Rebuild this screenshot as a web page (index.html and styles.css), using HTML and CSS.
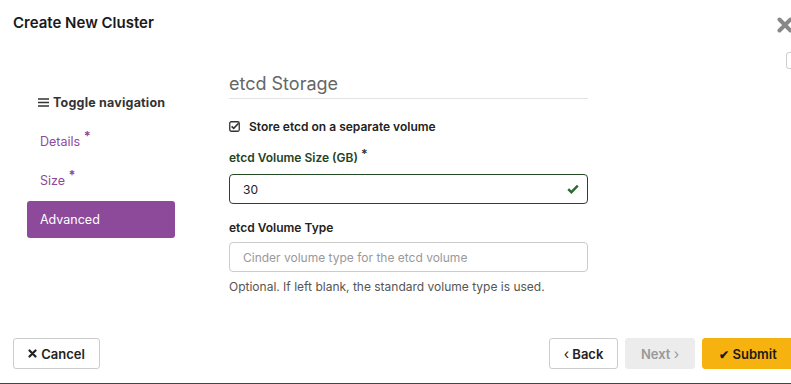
FILE: index.html
```html
<!DOCTYPE html>
<html>
  <head>
    <meta charset="utf-8">
    <title>Create New Cluster</title>
    <link rel="stylesheet" href="styles.css">
  </head>
  <body>
    <div class="modal">
      <div class="modal-header">
        <h4 class="modal-title">Create New Cluster</h4>
        <svg class="close" width="16" height="16" viewBox="0 0 16 16">
          <path d="M2.5 2.5 L13.5 13.5 M13.5 2.5 L2.5 13.5" stroke="#888" stroke-width="4" stroke-linecap="round"/>
        </svg>
        <span class="help-box"></span>
      </div>

      <div class="modal-body">
        <div class="wizard-nav">
          <div class="toggle">
            <svg width="11" height="9" viewBox="0 0 11 9">
              <path d="M0 1 H11 M0 4.5 H11 M0 8 H11" stroke="#333" stroke-width="1.6"/>
            </svg>
            Toggle navigation
          </div>
          <a class="step">Details <span class="req">*</span></a>
          <a class="step">Size <span class="req">*</span></a>
          <a class="step active">Advanced</a>
        </div>

        <div class="wizard-content">
          <h3 class="section-title">etcd Storage</h3>

          <div class="check-row">
            <span class="check-icon">
              <svg width="11" height="11" viewBox="0 0 11 11">
                <rect x="0.75" y="0.75" width="9.5" height="9.5" rx="1.5" fill="none" stroke="#333" stroke-width="1.3"/>
                <path d="M2.6 5.4 L4.7 7.4 L9.6 2.2" fill="none" stroke="#333" stroke-width="1.6"/>
              </svg>
            </span>
            Store etcd on a separate volume
          </div>

          <label class="field-label valid">etcd Volume Size (GB) <span class="req">*</span></label>
          <div class="input valid">
            <span>30</span>
            <svg width="12" height="10" viewBox="0 0 12 10">
              <path d="M1.2 5.2 L4.4 8.2 L10.8 1.6" fill="none" stroke="#2e6b34" stroke-width="2.4"/>
            </svg>
          </div>

          <label class="field-label">etcd Volume Type</label>
          <div class="input placeholder">Cinder volume type for the etcd volume</div>
          <p class="help">Optional. If left blank, the standard volume type is used.</p>
        </div>
      </div>

      <div class="modal-footer">
        <button class="btn cancel">
          <svg width="9" height="9" viewBox="0 0 9 9">
            <path d="M1.5 1.5 L7.5 7.5 M7.5 1.5 L1.5 7.5" stroke="#222" stroke-width="2.2" stroke-linecap="round"/>
          </svg>
          Cancel
        </button>
        <div class="right-btns">
          <button class="btn back"><span class="chev">&lsaquo;</span> Back</button>
          <button class="btn next disabled">Next <span class="chev">&rsaquo;</span></button>
          <button class="btn primary"><span class="ico">&#10004;</span> Submit</button>
        </div>
      </div>
    </div>
  </body>
</html>
```

FILE: styles.css
```css
body {
  margin: 0;
  overflow: hidden;
  background-color: white;
  font-family: 'Inter', sans-serif;
  color: #222;
}

.modal {
  width: 830px;
  height: 383px;
  border-bottom: 1px solid #444;
  display: flex;
  flex-direction: column;
  position: relative;
}

.modal-header {
  height: 55px;
  padding: 0 13px;
  position: relative;
}

.modal-title {
  margin: 0;
  padding-top: 13px;
  font-size: 15px;
  font-weight: 600;
  color: #1a1a1a;
}

.close {
  position: absolute;
  left: 777px;
  top: 17px;
}

.help-box {
  position: absolute;
  left: 786px;
  top: 52px;
  width: 14px;
  height: 15px;
  border: 1px solid #ccc;
  border-radius: 3px;
}

.modal-body {
  display: flex;
  flex: 1;
}

.wizard-nav {
  width: 148px;
  margin-left: 27px;
  padding-top: 39px;
}

.toggle {
  display: flex;
  align-items: center;
  gap: 4px;
  height: 16px;
  font-size: 12.5px;
  font-weight: 700;
  color: #333;
  padding-left: 11px;
  letter-spacing: 0.2px;
  padding-bottom: 2px;
}

.step {
  display: block;
  font-size: 12.5px;
  color: #8d4a9b;
  padding: 0 13px;
  line-height: 18px;
  margin-top: 21px;
}

.req {
  position: relative;
  top: -5px;
  font-weight: 700;
}

.step.active {
  background-color: #8d4a9b;
  color: white;
  border-radius: 3px;
  line-height: 37px;
  margin-top: 11px;
}

.wizard-content {
  width: 359px;
  margin-left: 54px;
}

.section-title {
  margin: 18px 0 0;
  font-size: 18px;
  font-weight: 400;
  color: #666;
  padding-bottom: 4px;
  border-bottom: 1px solid #e3e3e3;
}

.check-row {
  display: flex;
  align-items: center;
  gap: 9px;
  font-size: 12px;
  font-weight: 600;
  margin-top: 20px;
  color: #222;
}

.check-icon {
  display: flex;
}

.field-label {
  display: block;
  font-size: 12px;
  font-weight: 600;
  margin-top: 16px;
  color: #222;
}

.field-label.valid {
  color: #23431f;
}

.field-label .req {
  top: -4px;
  color: #333;
}

.input {
  margin-top: 9px;
  height: 28px;
  border: 1px solid #ccc;
  border-radius: 4px;
  display: flex;
  align-items: center;
  justify-content: space-between;
  padding: 0 8px 0 13px;
  font-size: 12px;
}

.input.valid {
  border-color: #234a24;
  color: #222;
}

.input.placeholder {
  margin-top: 7px;
  color: #999;
}

.valid + .field-label {
  margin-top: 16px;
}

.help {
  margin: 7px 0 0;
  font-size: 12px;
  color: #555;
}

.modal-footer {
  display: flex;
  justify-content: space-between;
  padding: 0 0 14px 13px;
  margin-right: 36px;
}

.right-btns {
  display: flex;
  gap: 7px;
}

.btn {
  height: 31px;
  border: 1px solid #ccc;
  border-radius: 3px;
  background-color: white;
  font-family: 'Inter', sans-serif;
  font-size: 13px;
  font-weight: 600;
  color: #222;
  padding: 0;
  text-align: center;
}

.btn.cancel {
  width: 87px;
  display: flex;
  align-items: center;
  justify-content: center;
  gap: 4px;
}

.btn.back {
  width: 69px;
}

.btn.next {
  width: 70px;
}

.btn .ico {
  font-size: 10px;
}

.btn .chev {
  font-size: 14px;
  font-weight: 400;
}

.btn.disabled {
  background-color: #ececec;
  border-color: #ececec;
  color: #999;
}

.btn.primary {
  background-color: #f6b20f;
  border-color: #f6b20f;
  color: #1a1a1a;
  width: 92px;
}

.btn.primary .ico {
  font-size: 12px;
}
```
